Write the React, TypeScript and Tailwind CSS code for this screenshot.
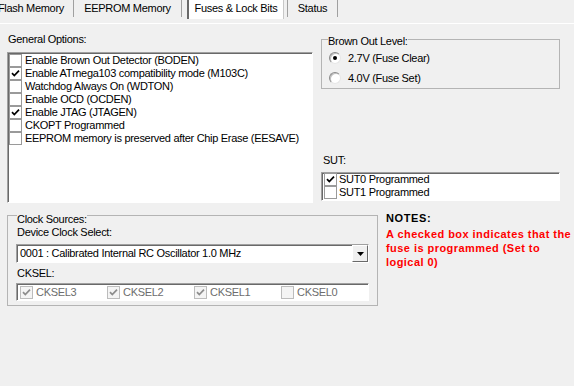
import React from "react";

type Opt = { label: string; checked?: boolean };

const generalOptions: Opt[] = [
  { label: "Enable Brown Out Detector (BODEN)" },
  { label: "Enable ATmega103 compatibility mode (M103C)", checked: true },
  { label: "Watchdog Always On (WDTON)" },
  { label: "Enable OCD (OCDEN)" },
  { label: "Enable JTAG (JTAGEN)", checked: true },
  { label: "CKOPT Programmed" },
  { label: "EEPROM memory is preserved after Chip Erase (EESAVE)" },
];

const sut: Opt[] = [
  { label: "SUT0 Programmed", checked: true },
  { label: "SUT1 Programmed" },
];

const cksel: Opt[] = [
  { label: "CKSEL3", checked: true },
  { label: "CKSEL2", checked: true },
  { label: "CKSEL1", checked: true },
  { label: "CKSEL0" },
];

function CheckBox({ checked, disabled }: { checked?: boolean; disabled?: boolean }) {
  return (
    <span
      className={
        "flex h-[13px] w-[13px] shrink-0 items-center justify-center border " +
        (disabled ? "border-[#bcbcbc] bg-[#f4f4f4]" : "border-[#9a9a9a] bg-white")
      }
    >
      {checked && (
        <svg width="11" height="11" viewBox="0 0 11 11">
          <path
            d="M2 5.2 L4.3 7.6 L9 2.6"
            fill="none"
            stroke={disabled ? "#8c8c8c" : "#000"}
            strokeWidth="1.7"
          />
        </svg>
      )}
    </span>
  );
}

function Radio({ checked }: { checked?: boolean }) {
  return (
    <span className="flex h-[12px] w-[12px] items-center justify-center rounded-full border border-t-[#8a8a8a] border-l-[#8a8a8a] border-r-[#e6e6e6] border-b-[#e6e6e6] bg-white shadow-[inset_1px_1px_0_#c0c0c0]">
      {checked && <span className="h-[4px] w-[4px] rounded-full bg-black" />}
    </span>
  );
}

const sunken =
  "border border-t-[#a0a0a0] border-l-[#a0a0a0] border-r-white border-b-white shadow-[inset_1px_1px_0_#696969]";

export default function App() {
  return (
    <div className="relative h-[386px] w-[574px] overflow-hidden whitespace-nowrap bg-[#f0f0f0] font-['Liberation_Sans',Arial,sans-serif] text-[11px] leading-[13px] tracking-[-0.3px] text-black">
      {/* tabs */}
      <div className="flex h-[24px] border-b border-white">
        <div className="flex h-[17px] w-[74px] items-center justify-end border-r border-[#a0a0a0] pb-[1px] pr-[9px]">
          Flash Memory
        </div>
        <div className="flex h-[17px] w-[108px] items-center justify-center border-r border-[#a0a0a0] pb-[1px]">
          EEPROM Memory
        </div>
        <div className="ml-[5px] flex h-[19px] w-[97px] items-center justify-center border-l-2 border-r border-l-[#696969] border-r-[#c8c8c8] bg-white pb-[3px]">
          Fuses &amp; Lock Bits
        </div>
        <div className="ml-[3px] flex h-[17px] w-[51px] items-center justify-center border-l border-r border-[#a0a0a0] pb-[1px]">
          Status
        </div>
      </div>

      {/* top section */}
      <div className="flex pl-[7px]">
        <div className="w-[306px]">
          <div className="h-[28px] pl-[1px] pt-[9px]">General Options:</div>
          <div className={"h-[151px] bg-white pl-[1px] pt-[1px] " + sunken}>
            {generalOptions.map((o) => (
              <div key={o.label} className="flex h-[13px] items-center gap-[3px]">
                <CheckBox checked={o.checked} />
                <span>{o.label}</span>
              </div>
            ))}
          </div>
        </div>

        <div className="ml-[8px] w-[239px]">
          <fieldset className="mt-[7px] h-[58px] border border-[#b4b4b4] pl-[6px]">
            <legend className="pt-[4px] leading-[13px]">Brown Out Level:</legend>
            <div className="flex h-[20px] items-center gap-[7px] pl-[1px]">
              <Radio checked />
              <span>2.7V (Fuse Clear)</span>
            </div>
            <div className="flex h-[20px] items-center gap-[7px] pl-[1px]">
              <Radio />
              <span>4.0V (Fuse Set)</span>
            </div>
          </fieldset>
          <div className="mt-[65px] h-[18px] pl-[2px]">SUT:</div>
          <div className={"h-[29px] bg-white pl-[2px] " + sunken}>
            {sut.map((o) => (
              <div key={o.label} className="flex h-[13px] items-center gap-[2px]">
                <CheckBox checked={o.checked} />
                <span>{o.label}</span>
              </div>
            ))}
          </div>
        </div>
      </div>

      {/* bottom section */}
      <div className="flex pl-[7px]">
        <fieldset className="mt-[2px] h-[101px] w-[369px] border border-[#b4b4b4] pl-[9px]">
          <legend className="pt-[8px] leading-[13px]">Clock Sources:</legend>
          <div className="h-[18px]">Device Clock Select:</div>
          <div className={"mr-[8px] ml-[-1px] flex h-[19px] items-center bg-white pl-[3px] " + sunken}>
            <span className="flex-1">0001 : Calibrated Internal RC Oscillator 1.0 MHz</span>
            <span className="flex h-[17px] w-[16px] items-center justify-center border border-t-white border-l-white border-r-[#696969] border-b-[#696969] bg-[#f0f0f0]">
              <svg width="7" height="4" viewBox="0 0 7 4">
                <path d="M0 0 H7 L3.5 4 Z" fill="#000" />
              </svg>
            </span>
          </div>
          <div className="h-[20px] pt-[4px]">CKSEL:</div>
          <div className={"mr-[8px] ml-[-1px] flex h-[18px] items-center bg-white pl-[3px] " + sunken}>
            {cksel.map((o) => (
              <div key={o.label} className="flex w-[87px] items-center gap-[3px] text-[#6d6d6d]">
                <CheckBox checked={o.checked} disabled />
                <span>{o.label}</span>
              </div>
            ))}
          </div>
        </fieldset>

        <div className="ml-[8px] pt-[9px] font-bold">
          <div className="tracking-[0.6px]">NOTES:</div>
          <div className="mt-[2px] leading-[14px] tracking-[0.45px] text-[#ff0000]">
            A checked box indicates that the
            <br />
            fuse is programmed (Set to
            <br />
            logical 0)
          </div>
        </div>
      </div>
    </div>
  );
}
